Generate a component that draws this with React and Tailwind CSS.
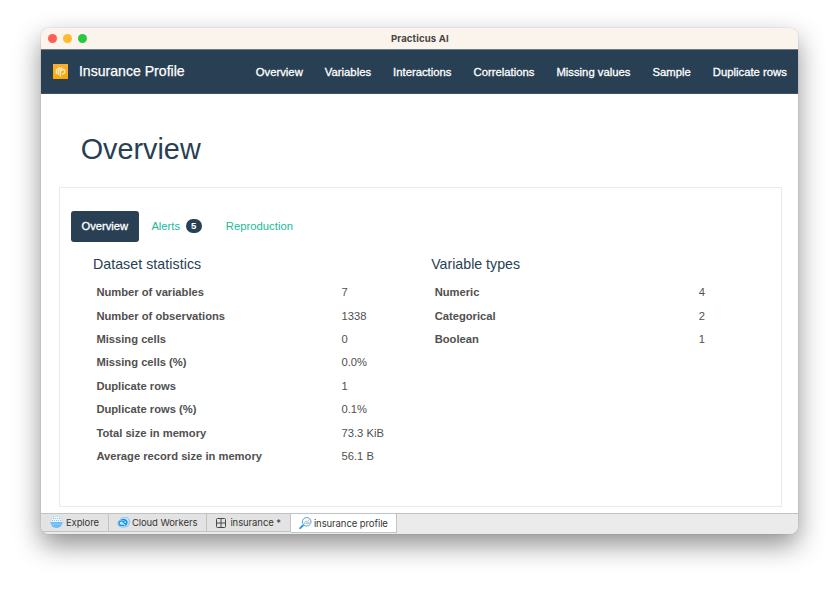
import React from "react";

const navItems = ["Overview", "Variables", "Interactions", "Correlations", "Missing values", "Sample", "Duplicate rows"];

const stats = [
  ["Number of variables", "7"],
  ["Number of observations", "1338"],
  ["Missing cells", "0"],
  ["Missing cells (%)", "0.0%"],
  ["Duplicate rows", "1"],
  ["Duplicate rows (%)", "0.1%"],
  ["Total size in memory", "73.3 KiB"],
  ["Average record size in memory", "56.1 B"],
];

const types = [
  ["Numeric", "4"],
  ["Categorical", "2"],
  ["Boolean", "1"],
];

function Logo() {
  return (
    <svg className="h-[15px] w-[15px]" viewBox="0 0 15 15">
      <defs>
        <linearGradient id="logo" x1="0" y1="0" x2="0" y2="1">
          <stop offset="0" stopColor="#f6b132" />
          <stop offset="1" stopColor="#ffa600" />
        </linearGradient>
      </defs>
      <rect width="15" height="15" fill="url(#logo)" />
      <g fill="none" stroke="#ffedca" strokeWidth="1.3" strokeLinejoin="round">
        <path d="M3.4 10V5.8L7.4 3.2" />
        <path d="M5.3 11V6.6L9.4 3.8" />
        <path d="M7.4 12.6V7.2l2.4-1.8 2 1v2.4L9 10.4" />
      </g>
    </svg>
  );
}

function ExploreIcon() {
  return (
    <svg className="h-[13px] w-[13px] shrink-0" viewBox="0 0 13 13">
      <circle cx="6.5" cy="6" r="5.7" fill="#f4fafe" stroke="#a9d3ef" strokeWidth=".6" />
      <path d="M.5 6h12a6 6 0 0 1-12 0Z" fill="#6dbcf3" />
      <path d="M2 4.5h9M3 2.5h7" stroke="#8fbfe0" strokeWidth="1" strokeDasharray="1 1" />
      <path d="M1.3 8.2h10.4" stroke="#96d0f7" strokeWidth=".8" />
    </svg>
  );
}

function CloudIcon() {
  return (
    <svg className="h-[11px] w-[13px] shrink-0" viewBox="0 0 13 11">
      <path d="M4.1 10A3.7 3.7 0 0 1 3.4 2.8 4.7 4.7 0 0 1 12.4 5 4.5 4.5 0 0 1 8.2 10Z" fill="#c4e4f8" stroke="#51acea" strokeWidth=".6" />
      <g fill="none" stroke="#1490e3" strokeWidth="1.2" strokeLinecap="round">
        <path d="M6.9 8.4H4.2a2.2 2.2 0 1 1 1.6-3.8l2.6 2.5" />
        <path d="M4.6 3A3.2 3.2 0 1 1 8.6 8.2" />
        <path d="M6.7 4.6a1.6 1.6 0 1 1 1.8 2.2" />
      </g>
    </svg>
  );
}

function GridIcon() {
  return (
    <svg className="h-[10px] w-[10px] shrink-0" viewBox="0 0 10 10" fill="none" stroke="#484848">
      <rect x=".5" y=".5" width="9" height="9" rx="1" />
      <path d="M5 .5v9M.5 5h9" />
    </svg>
  );
}

function SearchIcon() {
  return (
    <svg className="h-[13px] w-[13px] shrink-0" viewBox="0 0 13 13" fill="none">
      <path d="M1.2 11.2 4 8.4" stroke="#2494dd" strokeWidth="1.8" strokeLinecap="round" />
      <circle cx="7.7" cy="4.8" r="4.3" fill="#f5fafd" stroke="#46a8e5" strokeWidth="1" />
      <path d="m5.2 5.8 1.7-1.7 1.2.7 1.9-2" stroke="#f0ad74" strokeWidth=".9" />
      <path d="M5.8 7.1V6M7.2 7.1V5.4M8.6 7.1V5.6M9.9 7.1V4.6" stroke="#8da9ba" strokeWidth=".8" />
    </svg>
  );
}

function Table({ rows, labelClass }) {
  return (
    <div className="flex flex-col pl-[3.5px] pt-[6px] text-[11.2px] text-[#505050]">
      {rows.map(([label, value]) => (
        <div key={label} className="flex h-[23.42px] items-center leading-[16px]">
          <span className={`${labelClass} shrink-0 font-bold`}>{label}</span>
          <span className="whitespace-nowrap tracking-[0.04px]">{value}</span>
        </div>
      ))}
    </div>
  );
}

function BottomTab({ icon, label, className }) {
  return (
    <div className={`flex h-[18px] shrink-0 items-center whitespace-nowrap border-b border-r border-[#c3c3c3] bg-[#e3e3e3] ${className}`}>
      {icon}
      <span className="pt-[1.5px]">{label}</span>
    </div>
  );
}

export default function App() {
  return (
    <div className="h-[589px] w-[840px] overflow-hidden bg-white pl-[41.4px] pt-[28px] font-['Liberation_Sans',Arial,sans-serif]">
      <div className="flex h-[506px] w-[757px] flex-col overflow-hidden rounded-[8px] bg-white shadow-[0_0_1px_rgba(0,0,0,0.4),0_11px_27px_rgba(0,0,0,0.44)]">
        <header className="grid h-[21.4px] shrink-0 grid-cols-[1fr_auto_1fr] items-center bg-[#faf4ed] pl-[6.5px]">
          <div className="flex gap-[6px]">
            <span className="h-[9px] w-[9px] rounded-full bg-[#ff5f57]" />
            <span className="h-[9px] w-[9px] rounded-full bg-[#febc2e]" />
            <span className="h-[9px] w-[9px] rounded-full bg-[#28c840]" />
          </div>
          <span className="pr-[6.5px] font-['Inter',sans-serif] text-[9.6px] font-bold leading-[14px] tracking-[0.12px] text-[#484541]">Practicus AI</span>
        </header>

        <nav className="flex h-[44.6px] shrink-0 items-center border-b border-t border-b-[#3c5265] border-t-[#6e7a80] bg-[#283f54] pl-[11.5px] pr-[11.5px] text-white">
          <Logo />
          <span className="ml-[11px] whitespace-nowrap text-[14.1px] [-webkit-text-stroke:0.25px_white]">Insurance Profile</span>
          <div className="ml-auto flex gap-[22px] whitespace-nowrap pt-[1.5px] text-[11.3px] [-webkit-text-stroke:0.3px_white]">
            {navItems.map((item) => (
              <a key={item}>{item}</a>
            ))}
          </div>
        </nav>

        <main className="flex min-h-0 flex-1 flex-col pl-[17.2px] pr-[16.8px] pt-[37px]">
          <h1 className="pl-[22.1px] text-[28.8px] leading-[36px] text-[#283f54]">Overview</h1>
          <section className="mt-[20px] flex h-[320px] shrink-0 flex-col border border-[#e9eaef] pl-[11px] pt-[22.7px]">
            <div className="flex h-[31px] items-center text-[11.2px]">
              <span className="flex h-[31px] w-[68.5px] items-center justify-center rounded-[3px] bg-[#283f54] text-white [-webkit-text-stroke:0.3px_white]">Overview</span>
              <span className="ml-[12.3px] text-[#18bc9c]">Alerts</span>
              <span className="ml-[5.8px] flex h-[14px] w-[16px] items-center justify-center rounded-full bg-[#283f54] text-[9.6px] font-bold text-white">5</span>
              <span className="ml-[24px] text-[11.3px] text-[#18bc9c]">Reproduction</span>
            </div>
            <div className="flex pl-[22.3px] pt-[12.8px]">
              <div className="w-[338.3px] shrink-0">
                <h2 className="text-[14.2px] leading-[20px] tracking-[0.06px] text-[#283f54]">Dataset statistics</h2>
                <Table rows={stats} labelClass="w-[245px]" />
              </div>
              <div>
                <h2 className="text-[14.2px] leading-[20px] text-[#283f54]">Variable types</h2>
                <Table rows={types} labelClass="w-[264px]" />
              </div>
            </div>
          </section>
        </main>

        <footer className="flex h-[21px] shrink-0 items-start border-t border-[#bfc3c3] bg-[#ebebeb] font-['Inter',sans-serif] text-[9.5px] tracking-[-0.08px] text-[#363636]">
          <BottomTab icon={<ExploreIcon />} label="Explore" className="w-[67.5px] gap-[3px] pl-[8.5px]" />
          <BottomTab icon={<CloudIcon />} label="Cloud Workers" className="w-[98px] gap-[2px] pl-[8px]" />
          <BottomTab icon={<GridIcon />} label="insurance *" className="w-[84px] gap-[4px] pl-[9.5px]" />
          <div className="flex h-[19px] w-[106px] shrink-0 items-center gap-[2px] whitespace-nowrap border-b border-r border-[#c3c3c3] bg-white pl-[8px]">
            <SearchIcon />
            <span className="pt-[2px]">insurance profile</span>
          </div>
        </footer>
      </div>
    </div>
  );
}
